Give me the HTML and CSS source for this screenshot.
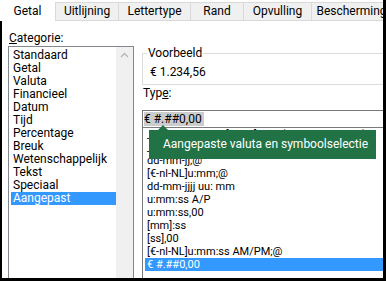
FILE: index.html
```html
<!DOCTYPE html>
<html lang="nl">
<head>
<meta charset="utf-8">
<title>Celeigenschappen</title>
<link rel="stylesheet" href="styles.css">
</head>
<body>
<div class="window">
  <div class="tabs">
    <div class="tab active t-getal">Getal</div>
    <div class="tab t-uit">Uitlijning</div>
    <div class="tab t-let">Lettertype</div>
    <div class="tab t-rand">Rand</div>
    <div class="tab t-opv">Opvulling</div>
    <div class="tab t-bes">Bescherming</div>
  </div>
  <div class="panel">
    <div class="left">
      <div class="label"><u>C</u>ategorie:</div>
      <div class="catlist">
        <ul class="items">
          <li>Standaard</li>
          <li>Getal</li>
          <li>Valuta</li>
          <li>Financieel</li>
          <li>Datum</li>
          <li>Tijd</li>
          <li>Percentage</li>
          <li>Breuk</li>
          <li>Wetenschappelijk</li>
          <li>Tekst</li>
          <li>Speciaal</li>
          <li class="selected">Aangepast</li>
        </ul>
        <div class="scroll">
          <svg class="arrow" width="9" height="6" viewBox="0 0 9 6"><path d="M1 5 L4.5 1.5 L8 5" fill="none" stroke="#b4b4b4" stroke-width="1.3"/></svg>
        </div>
      </div>
    </div>
    <div class="right">
      <fieldset class="preview">
        <legend>Voorbeeld</legend>
        <div class="sample">€ 1.234,56</div>
      </fieldset>
      <div class="label type-label">Typ<u>e</u>:</div>
      <div class="input"><span class="sel">€ #.##0,00</span></div>
      <div class="typelist">
        <ul class="titems">
          <li>_-€ * #.##0,00_-;[Rood]_-€ * (#.##0,00_-;_-@_)</li>
          <li>_-* #.##0,00_-;_-* -#.##0,00_-</li>
          <li>dd-mm-jj;@</li>
          <li>[€-nl-NL]u:mm;@</li>
          <li>dd-mm-jjjj uu: mm</li>
          <li>u:mm:ss A/P</li>
          <li>u:mm:ss,00</li>
          <li>[mm]:ss</li>
          <li>[ss],00</li>
          <li>[€-nl-NL]u:mm:ss AM/PM;@</li>
          <li class="selected">€ #.##0,00</li>
        </ul>
        <div class="tooltip">Aangepaste valuta en symboolselectie</div>
      </div>
    </div>
  </div>
</div>
</body>
</html>
```
FILE: styles.css
```css
* { box-sizing: border-box; }
html, body { margin: 0; padding: 0; background: #fff; }
body {
  font-family: Roboto, "Noto Sans", sans-serif;
  font-size: 12px;
  color: #000;
}
.window {
  width: 386px;
  height: 281px;
  border-right: 3px solid #000;
  border-bottom: 3px solid #000;
  overflow: hidden;
  display: flex;
  flex-direction: column;
  background: #fff;
}
.tabs {
  display: flex;
  align-items: flex-end;
  height: 21px;
  flex: none;
}
.tab {
  flex: none;
  height: 19px;
  background: #f0f0f0;
  border: 1px solid #d9d9d9;
  border-right: none;
  line-height: 17px;
  text-align: center;
  white-space: nowrap;
  overflow: hidden;
}
.tab.active {
  height: 21px;
  background: #fff;
  border: none;
  line-height: 23px;
}
.t-getal { width: 55px; }
.t-uit { width: 63px; }
.t-let { width: 72px; }
.t-rand { width: 53px; }
.t-opv { width: 68px; }
.t-bes { width: 80px; }
.panel {
  flex: 1;
  display: flex;
  border-left: 2px solid #000;
  min-height: 0;
}
.left {
  flex: none;
  width: 132px;
  margin-left: 6px;
  padding-top: 10px;
  display: flex;
  flex-direction: column;
}
.label {
  line-height: 15px;
  height: 15px;
  padding-left: 1px;
  white-space: nowrap;
}
.catlist {
  flex: 1;
  width: 126px;
  border: 1px solid #828790;
  border-bottom: none;
  display: flex;
  background: #fff;
}
.items {
  list-style: none;
  margin: 0;
  padding: 2px 0 0 2px;
  flex: 1;
}
.items li {
  height: 13px;
  line-height: 13px;
  padding-left: 2px;
  white-space: nowrap;
}
li.selected {
  background: #3399ff;
  color: #fff;
}
.scroll {
  flex: none;
  width: 17px;
  background: #f0f0f0;
  display: flex;
  justify-content: center;
  padding-top: 5px;
}
.arrow { display: block; }
.right {
  flex: none;
  width: 262px;
  margin-left: 2px;
  padding-top: 25px;
  display: flex;
  flex-direction: column;
}
.preview {
  margin: 0;
  padding: 0 4px 4px 4px;
  border: 1px solid #dcdcdc;
  min-width: 0;
}
.preview legend {
  padding: 0 1px;
  line-height: 15px;
}
.sample {
  padding-top: 4px;
  padding-left: 3px;
  line-height: 15px;
}
.type-label {
  margin-top: 1px;
}
.input {
  margin-top: 9px;
  height: 17px;
  border: 1px solid #7a7a7a;
  border-bottom: none;
  padding: 1px 0 0 1px;
  font-size: 12px;
  line-height: 14px;
  white-space: nowrap;
}
.sel {
  background: #cccccc;
  display: inline-block;
  padding-right: 2px;
}
.typelist {
  position: relative;
  flex: 1;
  border: 1px solid #7a7a7a;
  border-bottom: none;
  border-right: none;
  font-size: 11px;
}
.titems {
  list-style: none;
  margin: 0;
  padding: 0 0 0 2px;
}
.titems li {
  height: 13px;
  line-height: 13px;
  padding-left: 2px;
  white-space: nowrap;
  overflow: hidden;
}
.tooltip {
  position: absolute;
  left: 6px;
  top: 2px;
  width: 227px;
  height: 29px;
  background: #217346;
  color: #fff;
  font-size: 12px;
  line-height: 29px;
  padding-left: 14px;
  white-space: nowrap;
}
.tooltip::before {
  content: "";
  position: absolute;
  left: 9px;
  top: -5px;
  border-left: 5px solid transparent;
  border-right: 5px solid transparent;
  border-bottom: 5px solid #217346;
}
```
